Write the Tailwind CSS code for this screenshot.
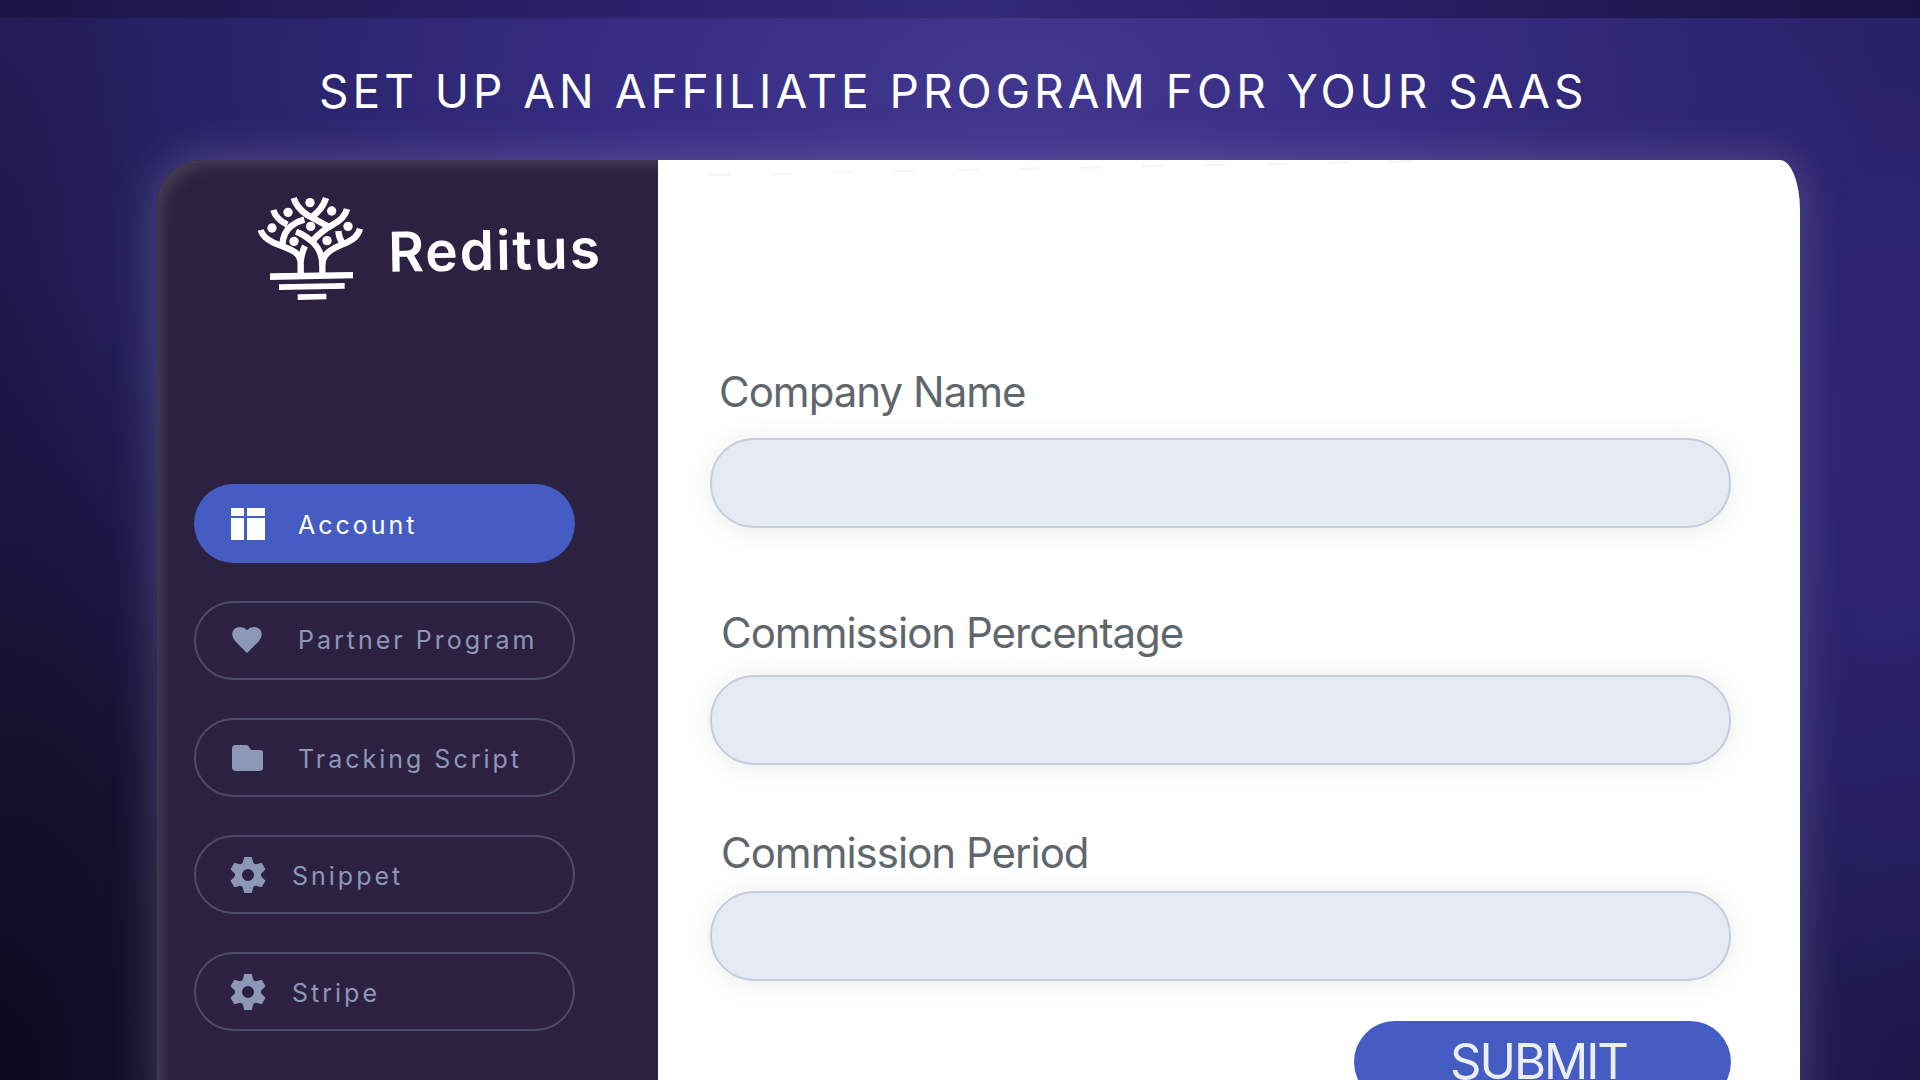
<!DOCTYPE html>
<html lang="en">
<head>
<meta charset="utf-8">
<title>Reditus</title>
<meta name="viewport" content="width=device-width, initial-scale=1">
<script src="https://cdn.jsdelivr.net/npm/@tailwindcss/browser@4"></script>
</head>
<body class="flex h-screen flex-col overflow-hidden bg-[#262163] bg-[radial-gradient(ellipse_45%_45%_at_53%_8%,#41378f_0%,#372d84_45%,transparent_100%),radial-gradient(ellipse_18%_55%_at_98%_40%,#2e2575_0%,transparent_100%),radial-gradient(ellipse_22%_75%_at_0%_100%,#0c0a1e_0%,#14112f_45%,transparent_100%),radial-gradient(ellipse_20%_50%_at_100%_100%,#1b1749_0%,transparent_100%),radial-gradient(ellipse_9%_60%_at_0%_30%,#1d184b_0%,transparent_100%)] font-['Inter',sans-serif]">
  <div class="h-[18px] w-full shrink-0 bg-[linear-gradient(90deg,rgba(22,16,58,.6),rgba(40,32,110,.6)_50%,rgba(22,16,58,.8))]"></div>
  <header class="flex h-[142px] shrink-0 items-center pt-1 pl-[319px]">
    <h1 class="text-[46px] leading-[56px] tracking-[4px] whitespace-nowrap text-white">SET UP AN AFFILIATE PROGRAM FOR YOUR SAAS</h1>
  </header>

  <main class="relative ml-[157px] mr-[120px] flex grow rounded-tl-[45px] rounded-tr-[20px_50px] shadow-[0_0_46px_2px_rgba(165,155,195,.32)]">
    <aside class="flex w-[501px] shrink-0 flex-col rounded-tl-[45px] bg-[#2c2140] pl-[37px] pr-[83px] shadow-[inset_10px_10px_14px_-4px_#453c52]">
      <a href="#" class="mt-[30px] ml-[56px] flex h-[115px] items-center text-white no-underline">
        <svg class="h-[115px] w-[120px] shrink-0" viewBox="0 0 360 345" fill="none" stroke="currentColor" stroke-width="19">
          <path d="M32 120Q38 142 70 158C130 180 152 188 152 220V252"/>
          <path d="M330 116Q324 142 290 158C245 176 217 190 217 225V252"/>
          <path d="M70 60Q78 88 112 104"/>
          <path d="M97 165Q100 125 125 107Q142 94 163 89"/>
          <path d="M131 24Q140 54 172 75Q205 93 236 110"/>
          <path d="M228 24Q218 58 184 82"/>
          <path d="M291 57Q284 86 245 106Q215 122 186 154"/>
          <path d="M138 125Q160 132 183 152Q217 180 217 225"/>
          <path d="M165 168Q155 188 152 215"/>
          <path d="M265 123Q266 140 277 160"/>
          <g fill="currentColor" stroke="none">
            <circle cx="180" cy="38" r="14"/><circle cx="114" cy="67" r="14"/><circle cx="245" cy="63" r="14"/><circle cx="66" cy="114" r="14"/><circle cx="182" cy="109" r="14"/><circle cx="294" cy="109" r="14"/><circle cx="132" cy="154" r="14"/><circle cx="231" cy="152" r="14"/>
            <path d="M60 250L309 246V265L60 270ZM87 283L284 279V296L87 300ZM143 313L229 311V328L143 330Z"/>
          </g>
        </svg>
        <span class="ml-[18px] -rotate-1 pt-1 text-[55px] leading-[60px] font-semibold tracking-[2px]">Reditus</span>
      </a>

      <nav class="mt-[179px] flex flex-col gap-[38px] text-[25px] tracking-[3px] whitespace-nowrap text-[#8d97b8]">
        <a href="#" aria-current="page" class="flex h-[79px] items-center rounded-[40px] bg-[#455dc2] pl-9 text-white">
          <svg class="w-9 h-9 shrink-0" viewBox="0 0 36 36" fill="currentColor"><path d="M1 2h13v8H1zM17 2h18v8H17zM1 12h13v22H1zM17 12h18v22H17z"/></svg>
          <span class="ml-8 pt-1">Account</span>
        </a>
        <a href="#" class="flex h-[79px] items-center rounded-[40px] border-2 border-[#4b4c69] pl-[34px]">
          <svg class="w-9 h-9 shrink-0" viewBox="0 0 36 36" fill="currentColor"><path d="M17 30L5 18C-1 10 4 4 10 4q4 0 7 3 3-3 7-3c6 0 11 6 5 14z"/></svg>
          <span class="ml-8">Partner Program</span>
        </a>
        <a href="#" class="flex h-[79px] items-center rounded-[40px] border-2 border-[#4b4c69] pl-[34px]">
          <svg class="w-9 h-9 shrink-0" viewBox="0 0 36 36" fill="currentColor"><path d="M5 5h11q2 0 3 2l2 3h9q3 0 3 3v15q0 3-4 3H6q-4 0-4-4V9q0-4 3-4z"/></svg>
          <span class="ml-8 pt-1">Tracking Script</span>
        </a>
        <a href="#" class="flex h-[79px] items-center rounded-[40px] border-2 border-[#4b4c69] pl-[34px]">
          <svg class="w-9 h-9 shrink-0" viewBox="-18 -18 36 36" fill="currentColor"><circle r="9.5" fill="none" stroke="currentColor" stroke-width="7"/><path id="teeth" d="M-6-10L-4-17Q-4-18-3-18H3Q4-18 4-17L6-10ZM-6 10L-4 17Q-4 18-3 18H3Q4 18 4 17L6 10Z"/><use href="#teeth" transform="rotate(60)"/><use href="#teeth" transform="rotate(120)"/></svg>
          <span class="ml-[26px] pt-1">Snippet</span>
        </a>
        <a href="#" class="flex h-[79px] items-center rounded-[40px] border-2 border-[#4b4c69] pl-[34px]">
          <svg class="w-9 h-9 shrink-0" viewBox="-18 -18 36 36" fill="currentColor"><circle r="9.5" fill="none" stroke="currentColor" stroke-width="7"/><use href="#teeth"/><use href="#teeth" transform="rotate(60)"/><use href="#teeth" transform="rotate(120)"/></svg>
          <span class="ml-[26px] pt-1">Stripe</span>
        </a>
      </nav>
    </aside>

    <form class="relative flex grow flex-col rounded-tr-[20px_50px] bg-white pt-[204px] pr-[69px] pl-[52px]">
      <svg class="absolute top-0 left-[50px] h-5 w-[720px]" viewBox="0 0 720 20" aria-hidden="true"><path d="M0 15L715 1" stroke="#f5f5f5" stroke-width="2" stroke-dasharray="22 40"/></svg>
      <label for="company" class="pl-[9px] text-[42px] leading-[56px] tracking-[-1px] text-[#5f676d]">Company Name</label>
      <input id="company" type="text" class="mt-[18px] h-[90px] w-full rounded-[44px] border-2 border-[#c4cde0] bg-[#e6eaf3] px-10 text-3xl shadow-[0_2px_24px_rgba(60,60,40,.1)]">
      <label for="percentage" class="mt-[77px] pl-[11px] text-[42px] leading-[56px] tracking-[-1px] text-[#5f676d]">Commission Percentage</label>
      <input id="percentage" type="text" class="mt-[14px] h-[90px] w-full rounded-[44px] border-2 border-[#c4cde0] bg-[#e6eaf3] px-10 text-3xl shadow-[0_2px_24px_rgba(60,60,40,.1)]">
      <label for="period" class="mt-[60px] pl-[11px] text-[42px] leading-[56px] tracking-[-1px] text-[#5f676d]">Commission Period</label>
      <input id="period" type="text" class="mt-[10px] h-[90px] w-full rounded-[44px] border-2 border-[#c4cde0] bg-[#e6eaf3] px-10 text-3xl shadow-[0_2px_24px_rgba(60,60,40,.1)]">
      <button type="submit" class="mt-10 h-[82px] w-[377px] shrink-0 self-end rounded-[41px] bg-[#455dc2] pr-2 text-[49px] leading-[78px] tracking-[-2px] text-[#eceef5]">SUBMIT</button>
    </form>
  </main>
</body>
</html>
